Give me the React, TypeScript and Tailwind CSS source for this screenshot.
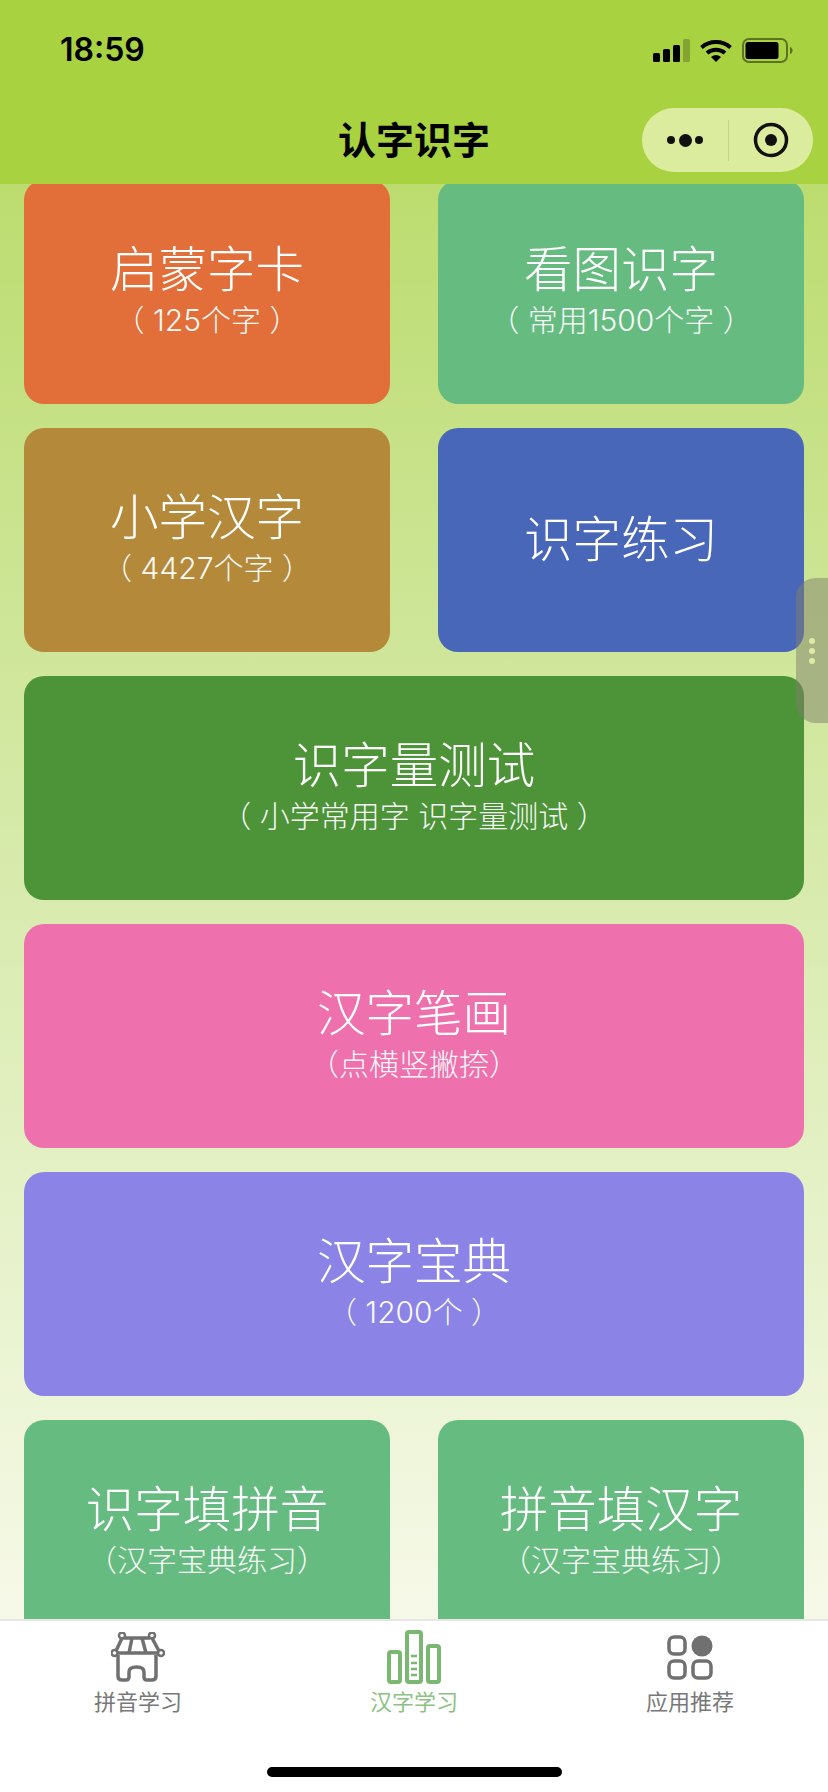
import React from "react";

const FONT = "font-['Inter','Noto_Sans_CJK_SC',sans-serif]";

function Card({
  title,
  sub,
  color,
  wide,
}: {
  title: string;
  sub?: string;
  color: string;
  wide?: boolean;
}) {
  return (
    <div
      className={`h-[224px] rounded-[20px] flex flex-col items-center justify-center text-white ${color} ${
        wide ? "col-span-2" : ""
      } ${sub ? "pb-[5px]" : ""}`}
    >
      <div className="text-[48.5px] leading-[56px] font-light">{title}</div>
      {sub && (
        <div className="text-[30px] leading-[34px] mt-[5px] font-light opacity-95 whitespace-pre">
          {sub}
        </div>
      )}
    </div>
  );
}

function StatusIcons() {
  return (
    <div className="flex items-center gap-[10px]">
      <svg width="37" height="23" viewBox="0 0 37 23">
        <rect x="0" y="14" width="7" height="9" rx="1.5" fill="#000" />
        <rect x="10" y="10" width="7" height="13" rx="1.5" fill="#000" />
        <rect x="20" y="6" width="7" height="17" rx="1.5" fill="#000" />
        <rect x="30" y="0" width="7" height="23" rx="1.5" fill="#000" opacity="0.22" />
      </svg>
      <svg width="32" height="23" viewBox="0 0 32 23">
        <path d="M1.5 8.5 A22 22 0 0 1 30.5 8.5" fill="none" stroke="#000" strokeWidth="4" />
        <path d="M7 14 A14 14 0 0 1 25 14" fill="none" stroke="#000" strokeWidth="4" />
        <path d="M11 18 L16 23 L21 18 A8 8 0 0 0 11 18 Z" fill="#000" />
      </svg>
      <svg width="52" height="25" viewBox="0 0 52 25">
        <rect x="1" y="1" width="44" height="23" rx="6" fill="none" stroke="#000" strokeOpacity="0.45" strokeWidth="2" />
        <rect x="3.5" y="4" width="33" height="17" rx="2.5" fill="#000" />
        <path d="M48 9 C51.5 10 51.5 15 48 16 Z" fill="#000" fillOpacity="0.45" />
      </svg>
    </div>
  );
}

function Capsule() {
  return (
    <div className="w-[171px] h-[64px] rounded-full bg-[#dcec9f] flex items-center">
      <div className="w-[86px] flex justify-center items-center gap-[3.5px]">
        <span className="w-[8px] h-[8px] rounded-full bg-[#111]" />
        <span className="w-[13px] h-[13px] rounded-full bg-[#111]" />
        <span className="w-[8px] h-[8px] rounded-full bg-[#111]" />
      </div>
      <div className="w-px h-[41px] bg-[#c4d48c]" />
      <div className="flex-1 flex justify-center">
        <svg width="36" height="36" viewBox="0 0 36 36">
          <circle cx="18" cy="18" r="15.5" fill="none" stroke="#111" strokeWidth="3.5" />
          <circle cx="18" cy="18" r="6" fill="#111" />
        </svg>
      </div>
    </div>
  );
}

function ShopIcon() {
  return (
    <svg width="54" height="50" viewBox="0 0 54 50" fill="none" stroke="#707070" strokeWidth="3.5">
      <g strokeWidth="2.5">
        <circle cx="11" cy="3.5" r="3" />
        <circle cx="41" cy="3.5" r="3" />
        <circle cx="3.5" cy="21" r="3" />
        <circle cx="50" cy="21" r="3" />
      </g>
      <path d="M13 6 H39 M11 6 L5 19 M41 6 L48 19 M6 21 H48" />
      <path d="M21 6 L18 21 M31 6 L35 21" />
      <path d="M7 23 V44 Q7 48 11 48 H15 Q18 48 18 45 V40 Q18 35 25.5 35 Q33 35 33 40 V45 Q33 48 36 48 H41 Q45 48 45 44 V23" />
    </svg>
  );
}

function BarsIcon() {
  return (
    <svg width="54" height="54" viewBox="0 0 54 54" fill="none" stroke="#7ab872" strokeWidth="4">
      <rect x="2" y="22" width="11" height="30" rx="2" />
      <rect x="20" y="2" width="14" height="50" rx="2" />
      <rect x="41" y="16" width="11" height="36" rx="2" />
      <path d="M24 26 H30 M24 33 H30 M24 39 H30 M24 45 H30" strokeWidth="2.5" />
    </svg>
  );
}

function AppsIcon() {
  return (
    <svg width="46" height="45" viewBox="0 0 46 45" fill="none" stroke="#707070" strokeWidth="3.5">
      <rect x="2" y="2" width="16" height="17" rx="5" />
      <circle cx="35" cy="11" r="10.5" fill="#707070" stroke="none" />
      <rect x="2" y="26" width="16" height="17" rx="5" />
      <rect x="26" y="26" width="18" height="17" rx="5" />
    </svg>
  );
}

function Tab({
  icon,
  label,
  active,
}: {
  icon: React.ReactNode;
  label: string;
  active?: boolean;
}) {
  return (
    <div className="flex-1 flex flex-col items-center">
      <div className="h-[56px] flex items-center justify-center">{icon}</div>
      <div className={`text-[22px] leading-[28px] mt-[3px] ${active ? "text-[#8cc284]" : "text-[#787878]"}`}>
        {label}
      </div>
    </div>
  );
}

export default function App() {
  return (
    <div className={`relative w-[828px] h-[1792px] overflow-hidden flex flex-col ${FONT}`}>
      {/* nav bar */}
      <header className="h-[184px] shrink-0 bg-[#a8d240] pl-[60px] pr-[34px] relative z-10">
        <div className="flex items-center justify-between h-[100px]">
          <span className="text-[32px] font-semibold text-black font-['Inter',sans-serif]">18:59</span>
          <StatusIcons />
        </div>
        <div className="flex items-center justify-center h-[64px] mt-[8px]">
          <span className="text-[38px] font-bold text-black ml-[-26px]">认字识字</span>
        </div>
        <div className="absolute right-[15px] top-[108px]">
          <Capsule />
        </div>
      </header>

      {/* scrolling content */}
      <main className="flex-1 min-h-0 overflow-hidden bg-linear-to-b from-[#bcdc6f] to-[#f6f9e8] px-[24px]">
        <div className="grid grid-cols-2 gap-x-[48px] gap-y-[24px] mt-[-4px]">
          <Card title="启蒙字卡" sub="（ 125个字 ）" color="bg-[#e26f3a]" />
          <Card title="看图识字" sub="（ 常用1500个字 ）" color="bg-[#66bc80]" />
          <Card title="小学汉字" sub="（ 4427个字 ）" color="bg-[#b4893a]" />
          <Card title="识字练习" color="bg-[#4967b9]" />
          <Card wide title="识字量测试" sub="（ 小学常用字 识字量测试 ）" color="bg-[#4d9338]" />
          <Card wide title="汉字笔画" sub="（点横竖撇捺）" color="bg-[#ee71ae]" />
          <Card wide title="汉字宝典" sub="（ 1200个 ）" color="bg-[#8b83e6]" />
          <Card title="识字填拼音" sub="（汉字宝典练习）" color="bg-[#66bc80]" />
          <Card title="拼音填汉字" sub="（汉字宝典练习）" color="bg-[#66bc80]" />
        </div>
      </main>

      {/* tab bar */}
      <footer className="h-[173px] shrink-0 bg-white border-t-2 border-[#e6e6e6] relative z-10">
        <div className="flex pt-[8px]">
          <Tab icon={<ShopIcon />} label="拼音学习" />
          <Tab icon={<BarsIcon />} label="汉字学习" active />
          <Tab icon={<AppsIcon />} label="应用推荐" />
        </div>
        <div className="absolute left-[267px] top-[146px] w-[295px] h-[10px] rounded-full bg-black" />
      </footer>

      {/* floating side handle */}
      <div className="absolute right-0 top-[578px] w-[32px] h-[145px] rounded-l-[20px] bg-[#7f7f6a]/50 flex flex-col items-center justify-center gap-[4px] z-20">
        <span className="w-[6px] h-[6px] rounded-full bg-[#dfe9a8]" />
        <span className="w-[6px] h-[6px] rounded-full bg-[#dfe9a8]" />
        <span className="w-[6px] h-[6px] rounded-full bg-[#dfe9a8]" />
      </div>
    </div>
  );
}
